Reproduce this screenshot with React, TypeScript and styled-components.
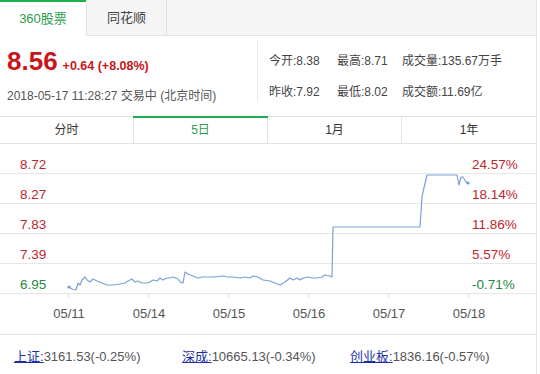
import React from "react";
import styled, { createGlobalStyle, css } from "styled-components";

const GlobalStyle = createGlobalStyle`
  body {
    margin: 0;
    background: #fff;
    font-family: "Liberation Sans", "Noto Sans CJK SC", sans-serif;
  }
`;

const GREEN = "#22a84e";
const RED = "#c0262d";
const DOWN = "#1f8a3d";

const Widget = styled.div`
  width: 537px;
  height: 374px;
  box-sizing: border-box;
  border-right: 1px solid #e3e3e3;
  background: #fff;
  overflow: hidden;
`;

const TopTabs = styled.div`
  display: flex;
  height: 36px;
`;

const TopTab = styled.div<{ $active?: boolean }>`
  box-sizing: border-box;
  height: 36px;
  font-size: 13px;
  text-align: center;
  ${(p) =>
    p.$active
      ? css`
          width: 86px;
          border-top: 2px solid #1fb04c;
          background: #fff;
          color: #2a9d4c;
          line-height: 33px;
        `
      : css`
          width: 81px;
          background: #f5f5f5;
          color: #444;
          border-left: 1px solid #e0e0e0;
          border-right: 1px solid #e0e0e0;
          border-bottom: 1px solid #e3e3e3;
          line-height: 35px;
        `}
`;

const TabFiller = styled.div`
  flex: 1;
  background: #f5f5f5;
  border-bottom: 1px solid #e3e3e3;
`;

const Header = styled.div`
  display: flex;
  align-items: flex-start;
  height: 80px;
`;

const QuoteBlock = styled.div`
  box-sizing: border-box;
  width: 258px;
  height: 62px;
  margin-top: 4px;
  padding: 6px 0 0 7px;
  border-right: 1px solid #ececec;
`;

const PriceRow = styled.div`
  display: flex;
  align-items: baseline;
  line-height: 30px;
  color: #c8161d;
`;

const Price = styled.span`
  font-size: 26px;
  font-weight: bold;
`;

const Change = styled.span`
  font-size: 12.5px;
  font-weight: bold;
  margin-left: 5px;
`;

const DateRow = styled.div`
  margin-top: 5px;
  font-size: 12px;
  line-height: 20px;
  color: #555;
  white-space: nowrap;
`;

const StatsGrid = styled.div`
  display: grid;
  grid-template-columns: 68px 65px auto;
  row-gap: 11px;
  padding: 15px 0 0 11px;
  font-size: 12px;
  line-height: 20px;
  color: #444;
  white-space: nowrap;
`;

const PeriodTabs = styled.div`
  display: grid;
  grid-template-columns: repeat(4, 1fr);
  box-sizing: border-box;
  height: 28px;
  border-top: 1px solid #e3e3e3;
  border-bottom: 1px solid #e3e3e3;
`;

const PeriodTab = styled.div<{ $active?: boolean }>`
  position: relative;
  text-align: center;
  font-size: 12px;
  line-height: 26px;
  color: ${(p) => (p.$active ? "#2a9d4c" : "#333")};
  border-right: 1px solid #e3e3e3;
  &:last-child {
    border-right: none;
  }
  ${(p) =>
    p.$active &&
    css`
      &::before {
        content: "";
        position: absolute;
        top: -1px;
        left: -1px;
        right: -1px;
        height: 2px;
        background: ${GREEN};
      }
    `}
`;

const ChartSvg = styled.svg`
  display: block;
`;

const Footer = styled.div`
  display: grid;
  grid-template-columns: 168px 168px auto;
  height: 40px;
  box-sizing: border-box;
  border-top: 1px solid #e6e6e6;
  padding: 12px 0 0 14px;
  font-size: 13px;
  line-height: 20px;
  color: #555;
  white-space: nowrap;
`;

const IndexLink = styled.a`
  color: #1d2fa8;
  text-decoration: underline;
`;

const linePts: [number, number][] = [
  [69, 287], [72, 289], [76, 290], [78, 283], [80, 285], [82, 280], [85, 277], [87, 280],
  [90, 282], [93, 279], [97, 281], [102, 283], [107, 285], [113, 285], [120, 284], [125, 283],
  [128, 281], [132, 279], [135, 282], [138, 281], [142, 283], [147, 283], [150, 282], [153, 280],
  [157, 281], [160, 278], [163, 280], [167, 278], [170, 278], [173, 277], [178, 279], [180, 282],
  [183, 283], [185, 272], [188, 274], [193, 276], [198, 278], [203, 277], [213, 277], [223, 276],
  [227, 277], [233, 277], [240, 278], [245, 277], [250, 278], [253, 276], [258, 277], [263, 280],
  [270, 281], [275, 283], [280, 285], [285, 282], [290, 278], [293, 280], [297, 278], [300, 280],
  [303, 278], [308, 277], [312, 278], [317, 278], [322, 277], [325, 275], [330, 276], [332, 277],
  [333, 227], [420, 227], [422, 197], [423, 192], [427, 175], [455, 175], [457, 175], [459, 185],
  [461, 177], [463, 177], [466, 182], [468, 183],
];

const TOP = 144;
const grid = [
  { y: 29, left: "8.72", right: "24.57%", up: true },
  { y: 59, left: "8.27", right: "18.14%", up: true },
  { y: 89, left: "7.83", right: "11.86%", up: true },
  { y: 119, left: "7.39", right: "5.57%", up: true },
  { y: 149, left: "6.95", right: "-0.71%", up: false },
];
const days = ["05/11", "05/14", "05/15", "05/16", "05/17", "05/18"];

const Chart = () => {
  const path = linePts
    .map(([x, y], i) => `${i === 0 ? "M" : "L"}${x} ${y - TOP}`)
    .join(" ");
  const [sx, sy] = linePts[0];
  const [ex, ey] = linePts[linePts.length - 1];
  return (
    <ChartSvg width={536} height={190} viewBox="0 0 536 190">
      {grid.map((g) => (
        <g key={g.left}>
          <line x1={0} x2={536} y1={g.y + 0.5} y2={g.y + 0.5} stroke="#e6e6e6" />
          <text
            x={20}
            y={g.y - 4}
            fontSize={13.5}
            fill={g.up ? RED : DOWN}
            fontFamily="Liberation Sans, sans-serif"
          >
            {g.left}
          </text>
          <text
            x={472}
            y={g.y - 4}
            fontSize={13.5}
            fill={g.up ? RED : DOWN}
            fontFamily="Liberation Sans, sans-serif"
          >
            {g.right}
          </text>
        </g>
      ))}
      {days.map((d, i) => {
        const x = 68 + i * 80;
        return (
          <g key={d}>
            <line x1={x + 0.5} x2={x + 0.5} y1={150} y2={154} stroke="#dcdcdc" />
            <text
              x={x + 1}
              y={174}
              fontSize={13}
              fill="#555"
              textAnchor="middle"
              fontFamily="Liberation Sans, sans-serif"
            >
              {d}
            </text>
          </g>
        );
      })}
      <path d={path} fill="none" stroke="#7aa1d6" strokeWidth={1.2} strokeLinejoin="round" />
      <circle cx={sx} cy={sy - TOP} r={1.6} fill="#6f98d0" />
      <circle cx={ex} cy={ey - TOP} r={1.6} fill="#6f98d0" />
    </ChartSvg>
  );
};

export default function App() {
  return (
    <>
      <GlobalStyle />
      <Widget>
        <TopTabs>
          <TopTab $active>360股票</TopTab>
          <TopTab>同花顺</TopTab>
          <TabFiller />
        </TopTabs>
        <Header>
          <QuoteBlock>
            <PriceRow>
              <Price>8.56</Price>
              <Change>+0.64 (+8.08%)</Change>
            </PriceRow>
            <DateRow>2018-05-17 11:28:27 交易中 (北京时间)</DateRow>
          </QuoteBlock>
          <StatsGrid>
            <span>今开:8.38</span>
            <span>最高:8.71</span>
            <span>成交量:135.67万手</span>
            <span>昨收:7.92</span>
            <span>最低:8.02</span>
            <span>成交额:11.69亿</span>
          </StatsGrid>
        </Header>
        <PeriodTabs>
          <PeriodTab>分时</PeriodTab>
          <PeriodTab $active>5日</PeriodTab>
          <PeriodTab>1月</PeriodTab>
          <PeriodTab>1年</PeriodTab>
        </PeriodTabs>
        <Chart />
        <Footer>
          <span>
            <IndexLink href="#">上证:</IndexLink>3161.53(-0.25%)
          </span>
          <span>
            <IndexLink href="#">深成:</IndexLink>10665.13(-0.34%)
          </span>
          <span>
            <IndexLink href="#">创业板:</IndexLink>1836.16(-0.57%)
          </span>
        </Footer>
      </Widget>
    </>
  );
}
